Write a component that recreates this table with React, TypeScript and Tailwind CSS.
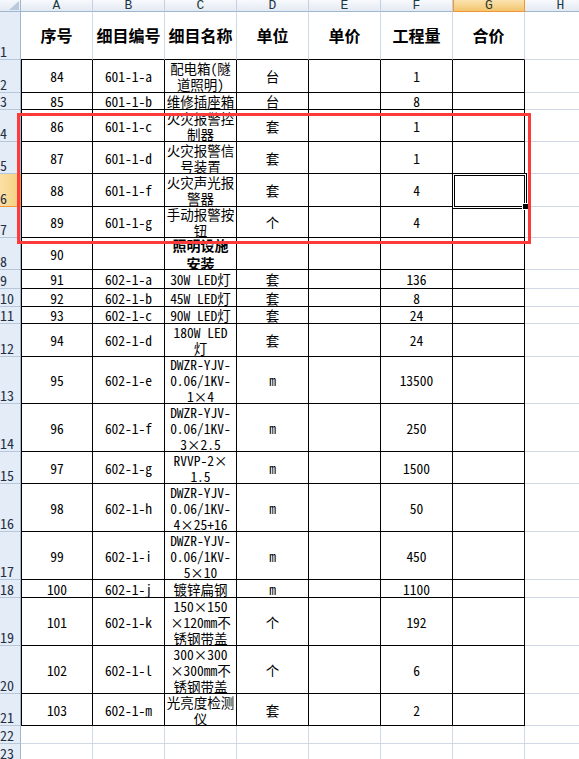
import React from "react"

type Row = {
  n: number
  h: string
  cells: string[]
  kind?: "head" | "bold"
}

const cols = ["A", "B", "C", "D", "E", "F", "G", "H"]

const rows: Row[] = [
  { n: 1, h: "h-[48px]", kind: "head", cells: ["序号", "细目编号", "细目名称", "单位", "单价", "工程量", "合价"] },
  { n: 2, h: "h-[33px]", cells: ["84", "601-1-a", "配电箱(隧\n道照明)", "台", "", "1", ""] },
  { n: 3, h: "h-[17px]", cells: ["85", "601-1-b", "维修插座箱", "台", "", "8", ""] },
  { n: 4, h: "h-[32px]", cells: ["86", "601-1-c", "火灾报警控\n制器", "套", "", "1", ""] },
  { n: 5, h: "h-[32px]", cells: ["87", "601-1-d", "火灾报警信\n号装置", "套", "", "1", ""] },
  { n: 6, h: "h-[33px]", cells: ["88", "601-1-f", "火灾声光报\n警器", "套", "", "4", ""] },
  { n: 7, h: "h-[31px]", cells: ["89", "601-1-g", "手动报警按\n钮", "个", "", "4", ""] },
  { n: 8, h: "h-[32px]", kind: "bold", cells: ["90", "", "照明设施\n安装", "", "", "", ""] },
  { n: 9, h: "h-[19px]", cells: ["91", "602-1-a", "30W LED灯", "套", "", "136", ""] },
  { n: 10, h: "h-[18px]", cells: ["92", "602-1-b", "45W LED灯", "套", "", "8", ""] },
  { n: 11, h: "h-[17px]", cells: ["93", "602-1-c", "90W LED灯", "套", "", "24", ""] },
  { n: 12, h: "h-[33px]", cells: ["94", "602-1-d", "180W LED\n灯", "套", "", "24", ""] },
  { n: 13, h: "h-[47px]", cells: ["95", "602-1-e", "DWZR-YJV-\n0.06/1KV-\n1×4", "m", "", "13500", ""] },
  { n: 14, h: "h-[48px]", cells: ["96", "602-1-f", "DWZR-YJV-\n0.06/1KV-\n3×2.5", "m", "", "250", ""] },
  { n: 15, h: "h-[32px]", cells: ["97", "602-1-g", "RVVP-2×\n1.5", "m", "", "1500", ""] },
  { n: 16, h: "h-[48px]", cells: ["98", "602-1-h", "DWZR-YJV-\n0.06/1KV-\n4×25+16", "m", "", "50", ""] },
  { n: 17, h: "h-[48px]", cells: ["99", "602-1-i", "DWZR-YJV-\n0.06/1KV-\n5×10", "m", "", "450", ""] },
  { n: 18, h: "h-[18px]", cells: ["100", "602-1-j", "镀锌扁钢", "m", "", "1100", ""] },
  { n: 19, h: "h-[48px]", cells: ["101", "602-1-k", "150×150\n×120mm不\n锈钢带盖", "个", "", "192", ""] },
  { n: 20, h: "h-[48px]", cells: ["102", "602-1-l", "300×300\n×300mm不\n锈钢带盖", "个", "", "6", ""] },
  { n: 21, h: "h-[32px]", cells: ["103", "602-1-m", "光亮度检测\n仪", "套", "", "2", ""] },
  { n: 22, h: "h-[18px]", cells: [] },
  { n: 23, h: "h-[18px]", cells: [] },
]

function Cell({ row, ci }: { row: Row; ci: number }) {
  const inTable = row.n >= 2 && row.n <= 21 && ci < 7
  const text = row.cells[ci] ?? ""
  let border = "border-r border-b border-r-[#d0d7e5] border-b-[#d0d7e5]"
  if (inTable) {
    border = ci === 0 ? "border-l border-r border-b border-black" : "border-r border-b border-black"
  } else if (row.n === 1 && ci < 7) {
    border = "border-r border-b border-r-[#d0d7e5] border-b-black"
  }
  let type = "text-[13.5px] leading-[16px]"
  if (row.kind === "head") type = "text-[16px] leading-[19px] font-bold font-['Noto_Sans_CJK_SC',sans-serif]"
  if (row.kind === "bold" && ci === 2) type = "text-[14px] leading-[18px] font-bold font-['Noto_Sans_CJK_SC',sans-serif]"

  return (
    <div className={`w-[72px] shrink-0 flex items-center justify-center overflow-hidden text-center whitespace-pre text-black ${border} ${type}`}>
      {text}
    </div>
  )
}

export default function App() {
  return (
    <div className="relative w-[579px] h-[759px] overflow-hidden bg-white font-['Noto_Sans_Mono_CJK_SC','Noto_Sans_CJK_SC','Liberation_Mono',monospace]">
      {/* column headers */}
      <div className="flex h-[12px]">
        <div className="w-[21px] shrink-0 relative bg-gradient-to-b from-[#f5f8fc] to-[#e3eaf4] border-r border-b border-[#9eb6ce]">
          <svg className="absolute right-[1px] bottom-[1px]" width="10" height="9" viewBox="0 0 10 9">
            <polygon points="10,0 10,9 0,9" fill="#b9c9dc" />
          </svg>
        </div>
        {cols.map((c) => (
          <div
            key={c}
            className={`w-[72px] shrink-0 flex items-center justify-center overflow-hidden text-[13px] leading-[11px] font-['Liberation_Mono',monospace] ${
              c === "G"
                ? "bg-gradient-to-b from-[#fbe3b0] to-[#f3c56c] border-r border-l border-b border-[#f29536] text-[#2f3a2a]"
                : "bg-gradient-to-b from-[#f7f9fc] to-[#e4eaf3] border-r border-b border-r-[#c3d0e0] border-b-[#9eb6ce] text-[#1d3a44]"
            }`}
          >
            {c}
          </div>
        ))}
      </div>

      {rows.map((row) => (
        <div key={row.n} className={`flex ${row.h}`}>
          <div
            className={`w-[21px] shrink-0 flex items-end pb-[1px] overflow-hidden text-[14px] leading-[13px] text-[#1f2f44] ${
              row.n === 6
                ? "bg-gradient-to-r from-[#fbe0a6] to-[#f6cf7e] border-r border-b border-[#f29536]"
                : "bg-[#e4ecf7] border-r border-b border-r-[#9eb6ce] border-b-[#b6c7dc]"
            }`}
          >
            <span>{row.n}</span>
          </div>
          {cols.map((c, ci) => (
            <Cell key={c} row={row} ci={ci} />
          ))}
        </div>
      ))}

      {/* active cell G6 */}
      <div className="absolute left-[452px] top-[173px] w-[75px] h-[36px] border border-black shadow-[inset_0_0_0_1px_white,inset_0_0_0_2px_black]" />
      <div className="absolute left-[522px] top-[203px] w-[7px] h-[7px] bg-black border border-white" />

      {/* red highlight box */}
      <div className="absolute left-[17px] top-[113px] w-[514px] h-[131px] border-[3px] border-[#fd3b3b]" />
    </div>
  )
}
